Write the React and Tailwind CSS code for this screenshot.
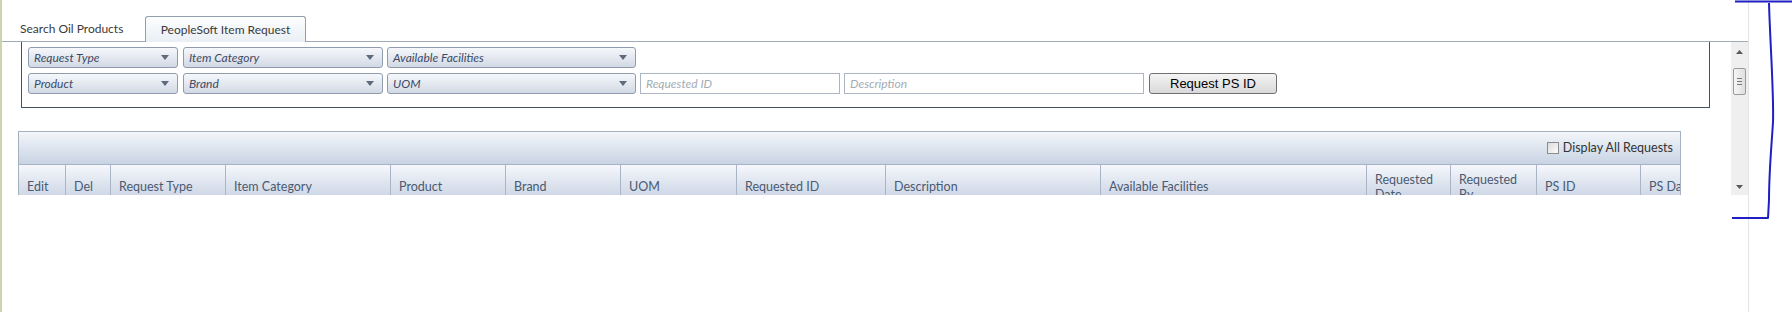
import React from 'react';

const columns = [
  { label: 'Edit', w: 'w-[46px]' },
  { label: 'Del', w: 'w-[45px]' },
  { label: 'Request Type', w: 'w-[115px]' },
  { label: 'Item Category', w: 'w-[165px]' },
  { label: 'Product', w: 'w-[115px]' },
  { label: 'Brand', w: 'w-[115px]' },
  { label: 'UOM', w: 'w-[116px]' },
  { label: 'Requested ID', w: 'w-[149px]' },
  { label: 'Description', w: 'w-[215px]' },
  { label: 'Available Facilities', w: 'w-[266px]' },
  { label: 'Requested Date', w: 'w-[84px]' },
  { label: 'Requested By', w: 'w-[86px]' },
  { label: 'PS ID', w: 'w-[104px]' },
  { label: 'PS Date', w: 'w-[90px]' },
];

const Dropdown = ({ label, w }) => (
  <div
    className={`${w} h-[21px] shrink-0 flex items-center justify-between rounded-[3px] border border-[#8f9cae] bg-gradient-to-b from-[#f6f8fb] to-[#d2d9e5] pl-[5px] pr-[8px]`}
  >
    <span className="italic text-[12px] text-[#3d4a66] leading-none">{label}</span>
    <svg width="8" height="5" viewBox="0 0 8 5">
      <path d="M0 0 H8 L4 5 Z" fill="#5d6b7c" />
    </svg>
  </div>
);

const TextBox = ({ placeholder, w }) => (
  <div className={`${w} h-[21px] shrink-0 flex items-center border border-[#abb6c2] bg-white pl-[5px]`}>
    <span className="italic text-[12px] text-[#a3abb4] leading-none">{placeholder}</span>
  </div>
);

export default function App() {
  return (
    <div className="relative flex h-[312px] w-[1792px] overflow-hidden bg-white font-['Lato',sans-serif]">
      {/* left edge */}
      <div className="w-[2px] shrink-0 bg-[#cfd5ab]" />

      <div className="flex w-[1747px] shrink-0 flex-col border-r border-[#e4e4e4]">
        {/* Tabs */}
        <div className="flex h-[42px] items-end border-b border-[#a2acb7]">
          <div className="flex h-[25px] w-[143px] items-center pl-[18px] text-[12px] text-[#3a3a3a]">
            Search Oil Products
          </div>
          <div className="-mb-px flex h-[26px] w-[161px] items-center justify-center rounded-t-[3px] border border-b-0 border-[#929eab] bg-gradient-to-b from-[#fdfefe] to-[#e9eff5] text-[12px] text-[#3a3a3a]">
            PeopleSoft Item Request
          </div>
        </div>

        {/* Tab content */}
        <div className="flex h-[153px]">
          <div className="flex-1 overflow-hidden">
            {/* Filter panel */}
            <div className="ml-[19px] flex h-[66px] w-[1689px] flex-col gap-[5px] border-x border-b border-[#45535f] pl-[6px] pt-[5px]">
              <div className="flex">
                <Dropdown label="Request Type" w="w-[150px]" />
                <div className="w-[5px]" />
                <Dropdown label="Item Category" w="w-[200px]" />
                <div className="w-[4px]" />
                <Dropdown label="Available Facilities" w="w-[249px]" />
              </div>
              <div className="flex">
                <Dropdown label="Product" w="w-[150px]" />
                <div className="w-[5px]" />
                <Dropdown label="Brand" w="w-[200px]" />
                <div className="w-[4px]" />
                <Dropdown label="UOM" w="w-[249px]" />
                <div className="w-[4px]" />
                <TextBox placeholder="Requested ID" w="w-[200px]" />
                <div className="w-[4px]" />
                <TextBox placeholder="Description" w="w-[300px]" />
                <div className="w-[5px]" />
                <button className="h-[21px] w-[128px] shrink-0 rounded-[3px] border border-[#707070] bg-gradient-to-b from-[#f4f4f4] to-[#d9d9d9] font-['Liberation_Sans',Arial,sans-serif] text-[13px] leading-none text-black">
                  Request PS ID
                </button>
              </div>
            </div>

            {/* Requests grid */}
            <div className="ml-[16px] mt-[23px] w-[1663px] overflow-hidden border-x border-t border-[#a6b1c0]">
              <div className="flex h-[32px] items-center justify-end bg-gradient-to-b from-[#f3f6fa] to-[#c8d3e3] pr-[7px]">
                <div className="flex items-center gap-[4px]">
                  <span className="h-[12px] w-[12px] border border-[#8d8d8d] bg-gradient-to-br from-[#dcdcdc] to-[#fbfbfb]" />
                  <span className="text-[12.5px] text-[#333]">Display All Requests</span>
                </div>
              </div>
              <div className="flex h-[44px] border-t border-[#a7b3c5] bg-gradient-to-b from-[#f5f7fb] to-[#bfcbde]">
                {columns.map((c, i) => (
                  <div
                    key={c.label}
                    className={`${c.w} shrink-0 flex items-center pl-[8px] pr-[4px] text-[12.5px] leading-[15px] text-[#4a5a72] ${i > 0 ? 'border-l border-[#a9b5c7]' : ''}`}
                  >
                    <span className="whitespace-normal">{c.label}</span>
                  </div>
                ))}
              </div>
            </div>
          </div>

          {/* Vertical scrollbar */}
          <div className="flex w-[17px] shrink-0 flex-col items-center bg-[#efefef]">
            <svg className="mt-[8px]" width="7" height="4" viewBox="0 0 7 4">
              <path d="M0 4 L3.5 0 L7 4 Z" fill="#5a5a5a" />
            </svg>
            <div className="mt-[14px] flex h-[27px] w-[13px] flex-col items-center justify-center gap-[2px] rounded-[2px] border border-[#9b9b9b] bg-gradient-to-r from-[#f6f6f6] to-[#dedede]">
              <span className="h-px w-[5px] bg-[#7a7a7a]" />
              <span className="h-px w-[5px] bg-[#7a7a7a]" />
              <span className="h-px w-[5px] bg-[#7a7a7a]" />
            </div>
            <svg className="mt-auto mb-[6px]" width="7" height="4" viewBox="0 0 7 4">
              <path d="M0 0 L7 0 L3.5 4 Z" fill="#5a5a5a" />
            </svg>
          </div>
        </div>
      </div>

      {/* Hand drawn bracket annotation */}
      <svg className="absolute left-0 top-0" width="1792" height="312" viewBox="0 0 1792 312" fill="none">
        <path
          d="M1735 1.5 H1792 M1769 3 C1770 40, 1774 95, 1773 122 C1772 140, 1769 170, 1769 200 L1768 218 H1732"
          stroke="#1f1fc4"
          strokeWidth="2"
          strokeLinejoin="round"
        />
      </svg>
    </div>
  );
}
